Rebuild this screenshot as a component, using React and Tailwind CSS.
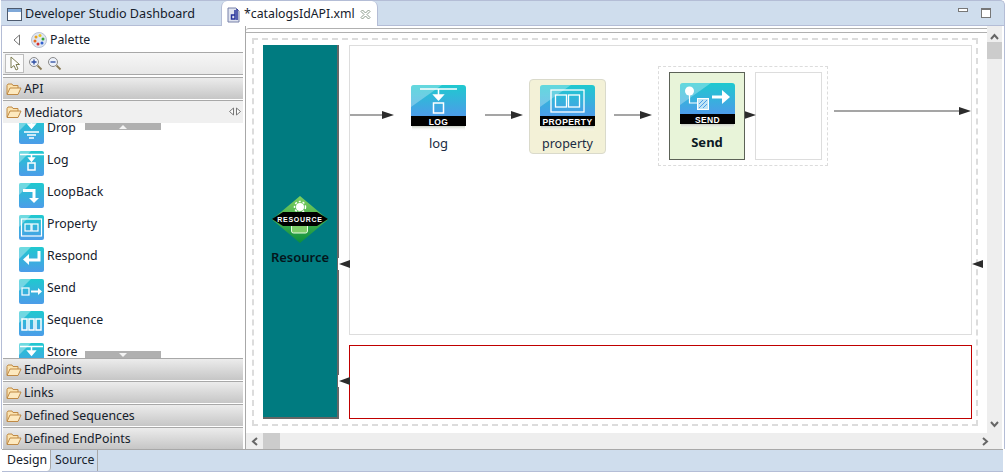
// mediator icon used in the palette list
const MedIcon = ({ children }) => (
  <svg width="25" height="25" viewBox="0 0 25 25" className="shrink-0">
    <defs>
      <linearGradient id="medg" x1="0" y1="0" x2="0" y2="1">
        <stop offset="0" stopColor="#1fc9cf" />
        <stop offset="1" stopColor="#4c9ce9" />
      </linearGradient>
    </defs>
    <rect width="25" height="25" rx="2" fill="url(#medg)" />
    <path d="M0 2a2 2 0 0 1 2-2h10L0 12z" fill="#fff" opacity="0.35" />
    {children}
  </svg>
);

const glyphs = {
  Drop: (
    <g fill="none" stroke="#fff" strokeWidth="1.5">
      <path d="M12.5 -2v9M9 5l3.500 4 3.500-4z" fill="#fff" />
      <path d="M5 13h15M8 16h9M10 19h5" />
    </g>
  ),
  Log: (
    <g fill="none" stroke="#fff" strokeWidth="1.5">
      <path d="M1 3.500h24" />
      <path d="M12.500 4v4M10 7l2.500 3 2.500-3z" fill="#fff" />
      <rect x="9" y="12" width="7" height="7" />
    </g>
  ),
  LoopBack: (
    <g fill="none" stroke="#fff">
      <path d="M4 7.500h11V16" strokeWidth="3" />
      <path d="M10 15h10l-5 5z" fill="#fff" stroke="none" />
    </g>
  ),
  Property: (
    <g fill="none" stroke="#fff" strokeWidth="1.2">
      <rect x="2.500" y="4" width="20" height="17" />
      <rect x="6" y="9" width="6" height="7" />
      <rect x="13" y="9" width="6" height="7" />
    </g>
  ),
  Respond: (
    <g fill="none" stroke="#fff">
      <path d="M20 4v9H9" strokeWidth="3" />
      <path d="M10 7v11l-6-5.500z" fill="#fff" stroke="none" />
    </g>
  ),
  Send: (
    <g fill="none" stroke="#fff" strokeWidth="1.2">
      <rect x="3" y="9" width="7" height="7" />
      <path d="M12 12.500h8" strokeWidth="2" />
      <path d="M19 9l4 3.500-4 3.500z" fill="#fff" stroke="none" />
    </g>
  ),
  Sequence: (
    <g fill="none" stroke="#fff" strokeWidth="1.500">
      <rect x="3" y="8" width="5" height="11" />
      <rect x="10" y="8" width="5" height="11" />
      <rect x="17" y="8" width="5" height="11" />
    </g>
  ),
  Store: (
    <g fill="none" stroke="#fff" strokeWidth="1.5">
      <path d="M1 3.500h23" />
      <path d="M12.500 4v4M9 8h7l-3.500 4z" fill="#fff" />
    </g>
  ),
};

const Folder = () => (
  <svg width="16" height="14" viewBox="0 0 16 14" className="shrink-0">
    <path d="M1 12V3.500L2 2h4l1 1.500h5V6" fill="#fbe3b0" stroke="#c08a45" />
    <path d="M1 12.500L4 6h11l-3 6.500z" fill="#fde9bf" stroke="#c08a45" />
  </svg>
);

const Drawer = ({ label, open, children, className }) => (
  <div
    className={
      "flex items-center gap-[2px] pl-[3px] h-[22px] text-[12.3px] text-[#15202b] " +
      (open
        ? "bg-[#f0f0f0] "
        : "bg-gradient-to-b from-[#ececec] to-[#c6c6c6] border-t border-t-[#a8a8a8] ") +
      (className || "")
    }
  >
    <Folder />
    <span className="leading-none mt-[2px]">{label}</span>
    {children}
  </div>
);

const mediators = ["Drop", "Log", "LoopBack", "Property", "Respond", "Send", "Sequence", "Store"];

const Palette = () => (
  <div className="w-[240px] flex flex-col shrink-0 h-full">
    <div className="h-[27px] flex items-center pt-[2px] text-[12.3px] border-b border-b-[#a8a8a8] shrink-0 bg-white">
      <svg width="10" height="12" viewBox="0 0 10 12" className="ml-[9px]">
        <path d="M7.500 1L2 6l5.500 5z" fill="#fff" stroke="#777" />
      </svg>
      <svg width="16" height="16" viewBox="0 0 16 16" className="ml-[9px]">
        <circle cx="8" cy="8" r="7.500" fill="#dfe6f2" stroke="#b8c2d2" />
        <circle cx="5" cy="5" r="1.500" fill="#e8a020" />
        <circle cx="9" cy="3.500" r="1.500" fill="#e9c820" />
        <circle cx="12" cy="7" r="1.500" fill="#3aa63a" />
        <circle cx="4" cy="9" r="1.500" fill="#e66a20" />
        <circle cx="7" cy="12" r="1.500" fill="#d63030" />
        <circle cx="11" cy="11" r="1.500" fill="#3060d0" />
      </svg>
      <span className="ml-[3px] text-[#15202b]">Palette</span>
    </div>
    <div className="h-[22px] flex items-center gap-[4px] shrink-0 bg-gradient-to-b from-[#f6f6f6] to-[#e8e8e8] border-b border-b-[#a8a8a8]">
      <div className="w-[19px] h-[19px] border border-[#bdbdbd] bg-[#fafafa] flex items-center justify-center ml-[2px]">
        <svg width="12" height="16" viewBox="0 0 12 16">
          <path d="M2 1v11l3-2.500 2 4.500 2-1-2-4.500h3.500z" fill="#fff" stroke="#7d7d50" />
        </svg>
      </div>
      {["+", "-"].map((s) => (
        <svg key={s} width="15" height="15" viewBox="0 0 15 15">
          <circle cx="6" cy="6" r="4.500" fill="#eef2fa" stroke="#8a8a8a" />
          <path d="M9.500 9.500l4 4" stroke="#8a7a55" strokeWidth="1.800" />
          <path d={s === "+" ? "M3.500 6h5M6 3.500v5" : "M3.500 6h5"} stroke="#2a4aa0" strokeWidth="1.300" />
        </svg>
      ))}
    </div>
    <div className="h-[2px] shrink-0" />
    <Drawer label="API" className="shrink-0" />
    <div className="h-[2px] shrink-0 border-b border-b-[#a8a8a8]" />
    <Drawer label="Mediators" open className="shrink-0 justify-start relative">
      <svg width="12" height="9" viewBox="0 0 12 9" className="absolute right-[2px] top-[6px]">
        <path d="M4.500 1L0.500 4.500 4.500 8zM7.500 1l4 3.500L7.500 8z" fill="#fff" stroke="#777" />
      </svg>
    </Drawer>
    <div className="relative flex-1 overflow-hidden bg-white min-h-0">
      <div className="absolute left-[16px] top-[-4px] flex flex-col gap-[7px]">
        {mediators.map((m) => (
          <div key={m} className="flex items-start gap-[3px] h-[25px] text-[12.3px] text-[#15202b] leading-[18px]">
            <MedIcon>{glyphs[m]}</MedIcon>
            <span>{m}</span>
          </div>
        ))}
      </div>
      <div className="absolute left-[82px] top-0 w-[76px] h-[7px] bg-[#b0b0b0] flex items-center justify-center">
        <svg width="8" height="4" viewBox="0 0 8 4"><path d="M4 0l4 4H0z" fill="#f4f4f4" /></svg>
      </div>
      <div className="absolute left-[82px] bottom-0 w-[76px] h-[7px] bg-[#b0b0b0] flex items-center justify-center">
        <svg width="8" height="4" viewBox="0 0 8 4"><path d="M4 4l4-4H0z" fill="#f4f4f4" /></svg>
      </div>
    </div>
    <Drawer label="EndPoints" className="shrink-0" />
    <div className="h-px shrink-0" />
    <Drawer label="Links" className="shrink-0" />
    <div className="h-px shrink-0" />
    <Drawer label="Defined Sequences" className="shrink-0" />
    <div className="h-px shrink-0" />
    <Drawer label="Defined EndPoints" className="shrink-0" />
  </div>
);

// big node icon with the black caption band
const NodeIcon = ({ caption, children, id }) => (
  <svg width="55" height="46" viewBox="0 0 55 46" className="block">
    <defs>
      <linearGradient id={id} x1="0" y1="0" x2="0" y2="1">
        <stop offset="0" stopColor="#1fc9cf" />
        <stop offset="1" stopColor="#4c9ce9" />
      </linearGradient>
      <linearGradient id={id + "s"} x1="0" y1="0" x2="0" y2="1">
        <stop offset="0" stopColor="#c9cfc4" />
        <stop offset="1" stopColor="#ffffff" stopOpacity="0" />
      </linearGradient>
    </defs>
    <path d="M0 31V3a3 3 0 0 1 3-3h49a3 3 0 0 1 3 3v28z" fill={"url(#" + id + ")"} />
    <path d="M0 3a3 3 0 0 1 3-3h28L0 22z" fill="#fff" opacity="0.3" />
    {children}
    <rect y="31" width="55" height="10" fill="#000" />
    <rect x="1" y="41" width="53" height="5" fill={"url(#" + id + "s)"} />
    <text x="27.500" y="39.500" textAnchor="middle" fontSize="8.500" fontWeight="700" fill="#fff" fontFamily="'Liberation Sans', sans-serif" letterSpacing="0.400">
      {caption}
    </text>
  </svg>
);

// arrow head with an optional shaft, placed on the diagram
const Arrow = ({ left, top, width, dir = "right", bare }) => (
  <svg
    width={width}
    height="10"
    viewBox={"0 0 " + width + " 10"}
    className="absolute"
    style={{ left, top }}
  >
    {!bare && <path d={"M0 5H" + (width - 10)} stroke="#a5a5a5" strokeWidth="2" />}
    {dir === "right" ? (
      <path d={"M" + (width - 12) + " 1L" + width + " 5L" + (width - 12) + " 9z"} fill="#2c2c2c" />
    ) : (
      <path d={"M0 5L11 1V9z"} fill="#2c2c2c" />
    )}
  </svg>
);

const Canvas = () => (
  <div className="flex-1 min-w-0 h-full flex flex-col">
    <div className="flex-1 min-h-0 flex">
      <div className="flex-1 min-w-0 pt-[2px] bg-white">
        <div className="h-[5px] border-y border-y-[#b0b0b0] rounded-tl-[3px]" />
        <div className="ml-[6px] mr-[9px] mt-[5px] h-[388px] border-2 border-dashed border-[#dcdcdc] pt-[5px] pl-[9px] pr-[4px] flex gap-[10px] relative">
          <div className="w-[76px] h-[374px] bg-[#007b80] border-r-2 border-b-2 border-r-[#666] border-b-[#666] flex flex-col items-center shrink-0 pt-[151px]">
            <svg width="56" height="47" viewBox="0 0 56 47">
              <defs>
                <linearGradient id="resg" x1="0" y1="0" x2="0" y2="1">
                  <stop offset="0" stopColor="#7fd05f" />
                  <stop offset="1" stopColor="#0c8f3d" />
                </linearGradient>
              </defs>
              <path d="M28 0L56 23.500L28 47L0 23.500z" fill="url(#resg)" />
              <circle cx="28" cy="11" r="4" fill="#fff" />
              <circle cx="28" cy="11" r="5.500" fill="none" stroke="#fff" strokeWidth="1.500" strokeDasharray="2 2" />
              <rect x="19.500" y="27" width="16" height="10" rx="2" fill="#7fce6a" stroke="#e8fbe0" />
              <path d="M0 23L11 16h34l11 7-11 7H11z" fill="#000" />
              <text x="28" y="25.800" textAnchor="middle" fontSize="7" fontWeight="700" fill="#fff" fontFamily="'Liberation Sans', sans-serif" letterSpacing="0.700">
                RESOURCE
              </text>
            </svg>
            <div className="text-[13px] font-semibold text-[#04161c] mt-[8px] leading-none">Resource</div>
          </div>
          <div className="flex-1 min-w-0 flex flex-col gap-[10px]">
            <div className="h-[290px] border border-[#dddddd] relative">
              <div className="absolute left-[61px] top-[39px] w-[55px] flex flex-col items-center">
                <NodeIcon caption="LOG" id="nlog">
                  <g fill="none" stroke="#fff" strokeWidth="1.500">
                    <path d="M9 4h37" />
                    <path d="M27.500 4v7M23 10h9l-4.500 5z" fill="#fff" />
                    <rect x="22.500" y="18" width="10" height="10" />
                  </g>
                </NodeIcon>
                <div className="text-[13px] text-[#1a2c44] mt-[6px] leading-none">log</div>
              </div>
              <div className="absolute left-[179px] top-[33px] w-[77px] h-[75px] bg-[#f3f1d7] border border-[#dadacb] rounded-[4px] flex flex-col items-center pt-[5px]">
                <NodeIcon caption="PROPERTY" id="nprop">
                  <g fill="none" stroke="#fff" strokeWidth="1.300">
                    <rect x="11" y="5" width="33" height="22" />
                    <rect x="15.500" y="10" width="11" height="12" />
                    <rect x="28.500" y="10" width="11" height="12" />
                  </g>
                </NodeIcon>
                <div className="text-[12.5px] text-[#1a2c44] mt-[7px] leading-none">property</div>
              </div>
              <div className="absolute left-[308px] top-[20px] w-[170px] h-[100px] border border-dashed border-[#dcdcdc] flex gap-[10px] pl-[10px] pt-[5px]">
                <div className="w-[76px] h-[88px] bg-[#e8f4d9] border border-[#5c6257] flex flex-col items-center pt-[10px]">
                  <NodeIcon caption="SEND" id="nsend">
                    <circle cx="9.500" cy="8" r="4.500" fill="#fff" />
                    <path d="M9.500 12v8h8" fill="none" stroke="#fff" strokeWidth="1.200" />
                    <rect x="17.500" y="15.500" width="11" height="11" fill="#bfe4f4" stroke="#fff" />
                    <path d="M19 25l8-8M19 21l4-4M23 25l4-4" stroke="#4c9ce9" strokeWidth="1" />
                    <path d="M32 14h12" stroke="#fff" strokeWidth="3" />
                    <path d="M42 7l8 7-8 7z" fill="#fff" />
                  </NodeIcon>
                  <div className="text-[13px] font-bold text-[#0c1a24] mt-[7px] leading-none">Send</div>
                </div>
                <div className="w-[67px] h-[88px] border border-[#dddddd]" />
              </div>
              <Arrow left={0} top={64} width={44} />
              <Arrow left={135} top={64} width={38} />
              <Arrow left={264} top={64} width={38} />
              <Arrow left={395} top={64} width={11} bare />
              <Arrow left={484} top={60} width={137} />
            </div>
            <div className="h-[74px] border border-[#c00000]" />
          </div>
          <div className="absolute left-[84px] top-[218px] w-[11px] h-[12px] bg-white" />
          <Arrow left={85} top={219} width={11} dir="left" bare />
          <Arrow left={718} top={219} width={11} dir="left" bare />
          <div className="absolute left-[84px] top-[335px] w-[11px] h-[12px] bg-white" />
          <Arrow left={85} top={336} width={11} dir="left" bare />
        </div>
      </div>
      <div className="w-[15px] shrink-0 bg-[#eeeeee] flex flex-col items-stretch justify-between">
        <div>
          <div className="h-[16px] flex items-end justify-center">
            <svg width="9" height="7" viewBox="0 0 9 7" className="mb-[2px]"><path d="M1 6l3.500-4L8 6" fill="none" stroke="#666" strokeWidth="2" /></svg>
          </div>
          <div className="h-[17px] bg-[#cccccc]" />
        </div>
        <div className="h-[16px] flex items-start justify-center">
          <svg width="9" height="7" viewBox="0 0 9 7" className="mt-[4px]"><path d="M1 1l3.500 4L8 1" fill="none" stroke="#666" strokeWidth="2" /></svg>
        </div>
      </div>
    </div>
    <div className="h-[16px] shrink-0 bg-[#eeeeee] flex items-center">
      <div className="w-[17px] flex justify-center">
        <svg width="7" height="9" viewBox="0 0 7 9"><path d="M6 1L2 4.500 6 8" fill="none" stroke="#666" strokeWidth="2" /></svg>
      </div>
      <div className="h-full w-[17px] bg-[#cccccc]" />
      <div className="flex-1" />
      <div className="w-[25px] flex justify-center pr-[8px]">
        <svg width="7" height="9" viewBox="0 0 7 9"><path d="M1 1l4 3.500L1 8" fill="none" stroke="#666" strokeWidth="2" /></svg>
      </div>
    </div>
  </div>
);

const App = () => (
  <div
    className="w-[1006px] h-[474px] overflow-hidden bg-white flex flex-col"
    style={{ fontFamily: "'Noto Sans', sans-serif" }}
  >
    <div className="h-[26px] shrink-0 mx-px bg-[#cfdded] border-t border-t-[#b4bdd6] border-r border-r-[#b4bdd6] rounded-tr-[5px] flex items-end text-[12.3px] text-[#15202b] relative">
      <div className="w-[220px] h-full flex items-center pt-[2px] pl-[6px] gap-[3px] border-b border-b-[#b4bdd6] text-[12.6px]">
        <svg width="15" height="13" viewBox="0 0 15 13">
          <rect x="0.500" y="0.500" width="14" height="12" fill="#fff" stroke="#4d5a6e" />
          <rect x="1" y="1" width="13" height="3" fill="#7fa8d8" />
        </svg>
        <span>Developer Studio Dashboard</span>
      </div>
      <div className="w-[157px] h-full bg-white border-x border-x-[#b4bdd6] rounded-t-[6px] flex items-center pt-[2px] pl-[5px] gap-[3px]">
        <svg width="14" height="16" viewBox="0 0 14 16">
          <path d="M1 1h8l3 3v11H1z" fill="#dfe3ef" stroke="#7680a8" />
          <path d="M8 3v9H4.500V8H8M10 2v11" fill="none" stroke="#26329a" strokeWidth="1.500" />
        </svg>
        <span>*catalogsIdAPI.xml</span>
        <svg width="11" height="11" viewBox="0 0 11 11" className="ml-[2px]">
          <path d="M1 2.500L2.500 1 5.500 4 8.500 1 10 2.500 7 5.500 10 8.500 8.500 10 5.500 7 2.500 10 1 8.500 4 5.500z" fill="#fff" stroke="#8a9a8a" />
        </svg>
      </div>
      <div className="flex-1 h-full border-b border-b-[#b4bdd6]" />
      <div className="absolute right-[36px] top-[7px] w-[10px] h-[4px] border border-[#777] bg-white" />
      <div className="absolute right-[13px] top-[7px] w-[10px] h-[10px] border border-[#777] border-t-2 bg-white" />
    </div>
    <div className="flex-1 min-h-0 flex ml-px mr-px pl-[1px] pr-[2px] border-x border-x-[#b4bdd6]">
      <Palette />
      <div className="w-[3px] shrink-0 border-r border-r-[#a8a8a8]" />
      <Canvas />
    </div>
    <div className="h-[23px] mb-[2px] ml-[2px] mr-[3px] shrink-0 bg-[#cfdded] border-t border-t-[#a8a8a8] border-b border-b-[#b4bdd6] flex text-[12.3px] text-[#15202b]">
      <div className="w-[49px] bg-white rounded-br-[4px] pl-[5px] leading-[19px] border-r border-r-[#a8a8a8]">Design</div>
      <div className="w-[47px] pl-[4px] leading-[19px] border-r border-r-[#a8a8a8]">Source</div>
    </div>
  </div>
);

export default App;
